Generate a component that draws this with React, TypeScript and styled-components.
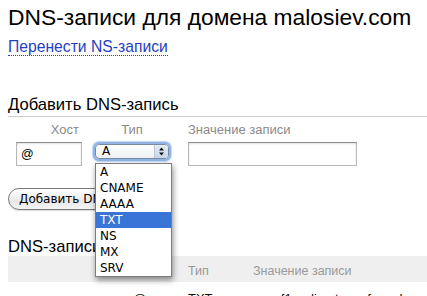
import React from "react";
import styled, { createGlobalStyle } from "styled-components";

const GlobalStyle = createGlobalStyle`
  html, body {
    margin: 0;
    padding: 0;
    background: #ffffff;
  }
  body {
    font-family: "Liberation Sans", Arial, sans-serif;
    color: #000;
    overflow: hidden;
  }
`;

const Page = styled.div`
  padding: 5px 0 0 8px;
  width: 419px;
  height: 291px;
  overflow: hidden;
`;

const Title = styled.h1`
  margin: 0;
  font-size: 22.8px;
  line-height: 25px;
  font-weight: normal;
  white-space: nowrap;
`;

const LinkRow = styled.div`
  margin-top: 8px;
  font-size: 15.7px;
  line-height: 17px;
`;

const DottedLink = styled.a`
  color: #1f3fc4;
  text-decoration: none;
  border-bottom: 1px dotted #1f3fc4;
  cursor: pointer;
`;

const SectionTitle = styled.h2<{ $ruled?: boolean }>`
  margin: 0;
  font-size: 16.6px;
  line-height: 19px;
  font-weight: normal;
  padding-bottom: ${(p) => (p.$ruled ? "2px" : "0")};
  border-bottom: ${(p) => (p.$ruled ? "1px solid #cccccc" : "none")};
`;

const AddSection = styled.div`
  margin-top: 40px;
`;

const FormRow = styled.div`
  display: flex;
  align-items: flex-start;
  padding-left: 8px;
  margin-top: 5px;
`;

const Field = styled.div<{ $width: number; $gap: number; $align: string }>`
  display: flex;
  flex-direction: column;
  width: ${(p) => p.$width}px;
  margin-right: ${(p) => p.$gap}px;
  text-align: ${(p) => p.$align};
`;

const FieldLabel = styled.div<{ $pad?: number }>`
  font-size: 13px;
  line-height: 15px;
  color: #8a8a8a;
  padding-right: ${(p) => p.$pad ?? 0}px;
  margin-bottom: 5px;
`;

const TextInput = styled.div`
  box-sizing: border-box;
  height: 24px;
  border: 1px solid #b8b8b8;
  border-top-color: #8e8e8e;
  box-shadow: inset 0 1px 2px rgba(0, 0, 0, 0.12);
  background: #fff;
  font-size: 12.5px;
  line-height: 22px;
  padding-left: 4px;
  text-align: left;
`;

const SelectWrap = styled.div`
  position: relative;
  margin-top: -1px;
`;

const SelectBox = styled.div`
  box-sizing: border-box;
  margin: 3px;
  height: 15px;
  width: 74px;
  display: flex;
  align-items: stretch;
  border: 1px solid #7a8aa0;
  border-radius: 4px;
  background: linear-gradient(#ffffff, #eef0f3);
  box-shadow: 0 0 0 2px #8fb4e6, 0 0 1px 3px rgba(120, 165, 225, 0.45);
  text-align: left;
`;

const SelectValue = styled.div`
  flex: 1;
  font-family: "DejaVu Sans", sans-serif;
  font-size: 12px;
  line-height: 13px;
  padding-left: 6px;
`;

const SelectArrows = styled.div`
  width: 13px;
  display: flex;
  align-items: center;
  justify-content: center;
  border-left: 1px solid #b9c4d4;
  border-radius: 0 3px 3px 0;
  background: linear-gradient(#e4ecf7, #c8d6ea);
`;

const Menu = styled.ul`
  position: absolute;
  top: 22px;
  left: 3px;
  width: 77px;
  box-sizing: border-box;
  margin: 0;
  padding: 0;
  list-style: none;
  background: #fff;
  border: 1px solid #7d7d7d;
  box-shadow: 1px 3px 6px rgba(0, 0, 0, 0.45);
  z-index: 5;
  text-align: left;
`;

const MenuItem = styled.li<{ $active?: boolean }>`
  height: 16px;
  line-height: 16px;
  padding-left: 4px;
  font-family: "DejaVu Sans", sans-serif;
  font-size: 12px;
  color: ${(p) => (p.$active ? "#fff" : "#000")};
  background: ${(p) => (p.$active ? "#3875d7" : "transparent")};
`;

const AddButton = styled.button`
  margin-top: 22px;
  height: 22px;
  padding: 0 10px;
  border: 1px solid #7b7b7b;
  border-radius: 11px;
  background: linear-gradient(#ffffff, #e8e8e8 60%, #f4f4f4);
  font-family: "DejaVu Sans", sans-serif;
  font-size: 12px;
  color: #000;
  box-shadow: 0 1px 1px rgba(0, 0, 0, 0.15);
`;

const RecordsSection = styled.div`
  margin-top: 27px;
`;

const Grid = styled.div`
  display: grid;
  grid-template-columns: 117px 55px 65px 1fr;
`;

const HeadRow = styled(Grid)`
  background: #efefef;
  height: 26px;
  box-sizing: border-box;
  padding-top: 8px;
  font-size: 12.5px;
  line-height: 15px;
  color: #999;
`;

const BodyRow = styled(Grid)`
  padding-top: 9px;
  font-size: 13px;
  line-height: 15px;
  color: #111;
`;

const Cell = styled.div`
  padding-left: 8px;
  white-space: nowrap;
`;

const types = ["A", "CNAME", "AAAA", "TXT", "NS", "MX", "SRV"];

export default function App() {
  return (
    <>
      <GlobalStyle />
      <Page>
        <Title>DNS-записи для домена malosiev.com</Title>
        <LinkRow>
          <DottedLink>Перенести NS-записи</DottedLink>
        </LinkRow>

        <AddSection>
          <SectionTitle $ruled>Добавить DNS-запись</SectionTitle>
          <FormRow>
            <Field $width={66} $gap={10} $align="right">
              <FieldLabel $pad={3}>Хост</FieldLabel>
              <TextInput>@</TextInput>
            </Field>
            <Field $width={80} $gap={16} $align="center">
              <FieldLabel>Тип</FieldLabel>
              <SelectWrap>
                <SelectBox>
                  <SelectValue>A</SelectValue>
                  <SelectArrows>
                    <svg width="5" height="9" viewBox="0 0 5 9">
                      <path d="M2.5 0.5 L5 3.5 H0 Z" fill="#111" />
                      <path d="M2.5 8.5 L5 5.5 H0 Z" fill="#111" />
                    </svg>
                  </SelectArrows>
                </SelectBox>
                <Menu>
                  {types.map((t) => (
                    <MenuItem key={t} $active={t === "TXT"}>
                      {t}
                    </MenuItem>
                  ))}
                </Menu>
              </SelectWrap>
            </Field>
            <Field $width={169} $gap={0} $align="left">
              <FieldLabel>Значение записи</FieldLabel>
              <TextInput />
            </Field>
          </FormRow>
          <AddButton>Добавить DNS-запись</AddButton>
        </AddSection>

        <RecordsSection>
          <SectionTitle>DNS-записи</SectionTitle>
          <HeadRow>
            <Cell />
            <Cell>Хост</Cell>
            <Cell>Тип</Cell>
            <Cell>Значение записи</Cell>
          </HeadRow>
          <BodyRow>
            <Cell />
            <Cell>@</Cell>
            <Cell>TXT</Cell>
            <Cell>v=spf1 redirect=_spf.yandex.ru</Cell>
          </BodyRow>
        </RecordsSection>
      </Page>
    </>
  );
}
